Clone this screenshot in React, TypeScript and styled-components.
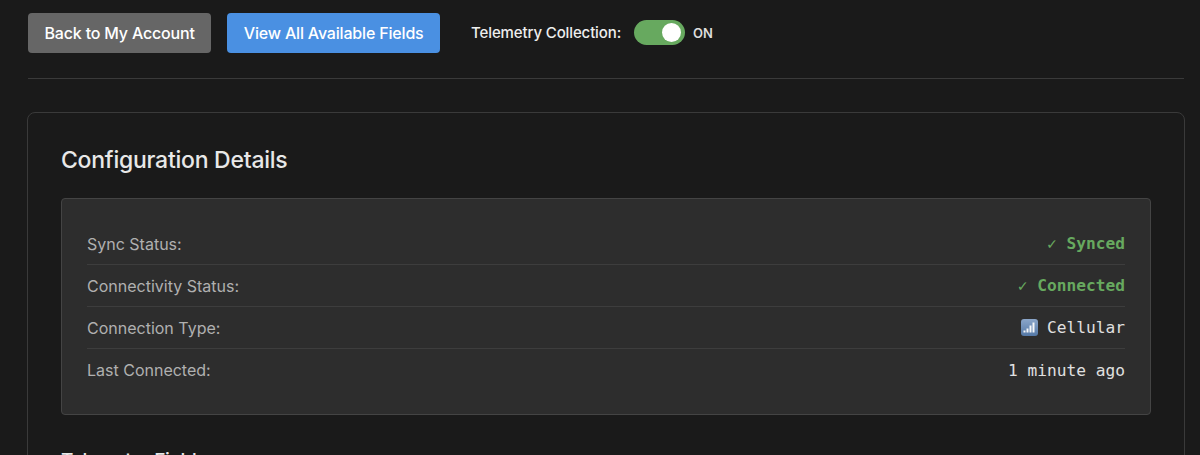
import React from "react";
import styled, { createGlobalStyle } from "styled-components";

const Global = createGlobalStyle`
  html, body { margin: 0; padding: 0; background: #1a1a1a; height: 455px; overflow: hidden; }
  * { box-sizing: border-box; }
  body { font-family: Inter, "Liberation Sans", sans-serif; }
`;

const Page = styled.div`
  padding: 13px 15px 0 27px;
`;

const Toolbar = styled.div`
  display: flex;
  align-items: center;
  gap: 16px;
  height: 66px;
  margin-left: 1px;
  margin-right: 1px;
  padding-bottom: 26px;
  border-bottom: 1px solid #3a3a3a;
`;

const Button = styled.button<{ $primary?: boolean }>`
  height: 40px;
  padding: 0 16.5px;
  border: 0;
  border-radius: 4px;
  font: 500 16px Inter, sans-serif;
  letter-spacing: -0.18px;
  color: #fff;
  background: ${(p) => (p.$primary ? "#4a90e2" : "#666")};
`;

const ToggleGroup = styled.div`
  display: flex;
  align-items: center;
  margin-left: 15px;
  color: #eee;
  font-size: 15px;
  letter-spacing: -0.12px;
  font-weight: 500;
`;

const Track = styled.div`
  display: flex;
  justify-content: flex-end;
  align-items: center;
  width: 51px;
  height: 25px;
  margin: 0 8px 0 13px;
  padding: 4px;
  border-radius: 13px;
  background: #67a95f;
`;

const Knob = styled.div`
  width: 19px;
  height: 19px;
  border-radius: 50%;
  background: #fff;
`;

const ToggleState = styled.span`
  font-size: 13px;
  font-weight: 600;
  color: #ddd;
`;

const Card = styled.section`
  margin-top: 33px;
  padding: 33px;
  border: 1px solid #3a3a3a;
  border-radius: 8px;
  background: #1a1a1a;
  height: 400px;
`;

const Title = styled.h2`
  margin: 0 0 23px;
  font-size: 23px;
  letter-spacing: -0.25px;
  line-height: 29px;
  font-weight: 500;
  color: #e8e8e8;
`;

const Panel = styled.div`
  padding: 24px 25px;
  height: 217px;
  border: 1px solid #444;
  border-radius: 4px;
  background: #2d2d2d;
`;

const Row = styled.div`
  display: flex;
  justify-content: space-between;
  align-items: center;
  height: 42px;
  border-bottom: 1px solid #3d3d3d;
  &:last-child { border-bottom: 0; }
`;

const Label = styled.span`
  font-size: 16px;
  color: #b0b0b0;
`;

const Value = styled.span<{ $ok?: boolean }>`
  font-family: "DejaVu Sans Mono", "Liberation Mono", monospace;
  font-size: 16.2px;
  font-weight: ${(p) => (p.$ok ? 700 : 400)};
  color: ${(p) => (p.$ok ? "#67a95f" : "#e0e0e0")};
  display: flex;
  align-items: center;
  gap: 9px;
`;

const Heading2 = styled.h3`
  margin: 34px 0 0;
  font-size: 19px;
  letter-spacing: -0.3px;
  font-weight: 500;
  color: #e8e8e8;
`;

const SignalIcon = () => (
  <svg width="17" height="17" viewBox="0 0 17 17">
    <defs>
      <linearGradient id="signalBg" x1="0" y1="0" x2="0" y2="1">
        <stop offset="0" stopColor="#8ba6c9" />
        <stop offset="1" stopColor="#5478a6" />
      </linearGradient>
    </defs>
    <rect width="17" height="17" rx="3" fill="url(#signalBg)" />
    <rect x="2.5" y="11.5" width="2" height="2" fill="#f4f6f8" />
    <rect x="5.5" y="9.5" width="2" height="4" fill="#f4f6f8" />
    <rect x="8.5" y="6.5" width="2" height="7" fill="#f4f6f8" />
    <rect x="11.5" y="3.5" width="2" height="10" fill="#f4f6f8" />
  </svg>
);

export default function App() {
  return (
    <Page>
      <Global />
      <Toolbar>
        <Button>Back to My Account</Button>
        <Button $primary>View All Available Fields</Button>
        <ToggleGroup>
          Telemetry Collection:
          <Track><Knob /></Track>
          <ToggleState>ON</ToggleState>
        </ToggleGroup>
      </Toolbar>
      <Card>
        <Title>Configuration Details</Title>
        <Panel>
          <Row><Label>Sync Status:</Label><Value $ok>✓ Synced</Value></Row>
          <Row><Label>Connectivity Status:</Label><Value $ok>✓ Connected</Value></Row>
          <Row><Label>Connection Type:</Label><Value><SignalIcon />Cellular</Value></Row>
          <Row><Label>Last Connected:</Label><Value>1 minute ago</Value></Row>
        </Panel>
        <Heading2>Telemetry Fields</Heading2>
      </Card>
    </Page>
  );
}
